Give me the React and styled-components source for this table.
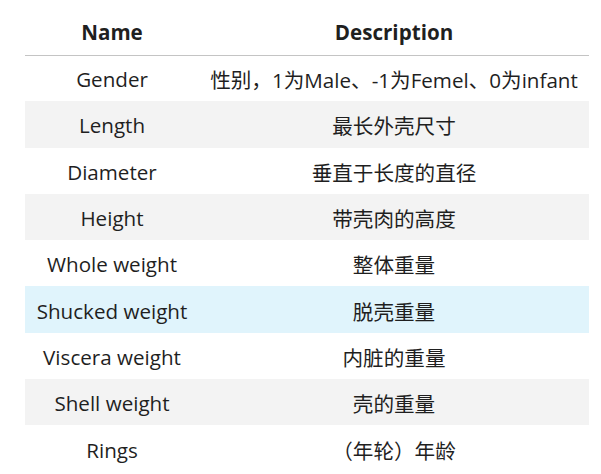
import React from "react";
import styled, { createGlobalStyle } from "styled-components";

const Global = createGlobalStyle`
  html, body { margin: 0; padding: 0; background: #fff; }
  body { font-family: "Open Sans", "Noto Sans CJK SC", sans-serif; color: #1f1f1f; }
`;

const Wrap = styled.div`
  padding: 0 12px 0 25px;
`;

const Table = styled.table`
  border-collapse: collapse;
  width: 564px;
  table-layout: fixed;
  font-size: 20.6px;
`;

const HeadCell = styled.th`
  font-weight: 700;
  height: 55px;
  padding: 10px 0 0;
  box-sizing: border-box;
  text-align: center;
  border-bottom: 1px solid #c4c4c4;
  width: ${(p) => p.$w}px;
`;

const Row = styled.tr`
  height: 46.3px;
  background: ${(p) => (p.$hover ? "#e0f4fc" : p.$stripe ? "#f3f3f3" : "#fff")};
`;

const Cell = styled.td`
  text-align: center;
  padding: 2px 4px 0;
  white-space: nowrap;
`;

const rows = [
  ["Gender", "性别，1为Male、-1为Femel、0为infant"],
  ["Length", "最长外壳尺寸"],
  ["Diameter", "垂直于长度的直径"],
  ["Height", "带壳肉的高度"],
  ["Whole weight", "整体重量"],
  ["Shucked weight", "脱壳重量"],
  ["Viscera weight", "内脏的重量"],
  ["Shell weight", "壳的重量"],
  ["Rings", "（年轮）年龄"],
];

export default function App() {
  return (
    <Wrap>
      <Global />
      <Table>
        <thead>
          <tr>
            <HeadCell $w={174}>Name</HeadCell>
            <HeadCell $w={390}>Description</HeadCell>
          </tr>
        </thead>
        <tbody>
          {rows.map(([n, d], i) => (
            <Row key={n} $stripe={i % 2 === 1} $hover={i === 5}>
              <Cell>{n}</Cell>
              <Cell>{d}</Cell>
            </Row>
          ))}
        </tbody>
      </Table>
    </Wrap>
  );
}
